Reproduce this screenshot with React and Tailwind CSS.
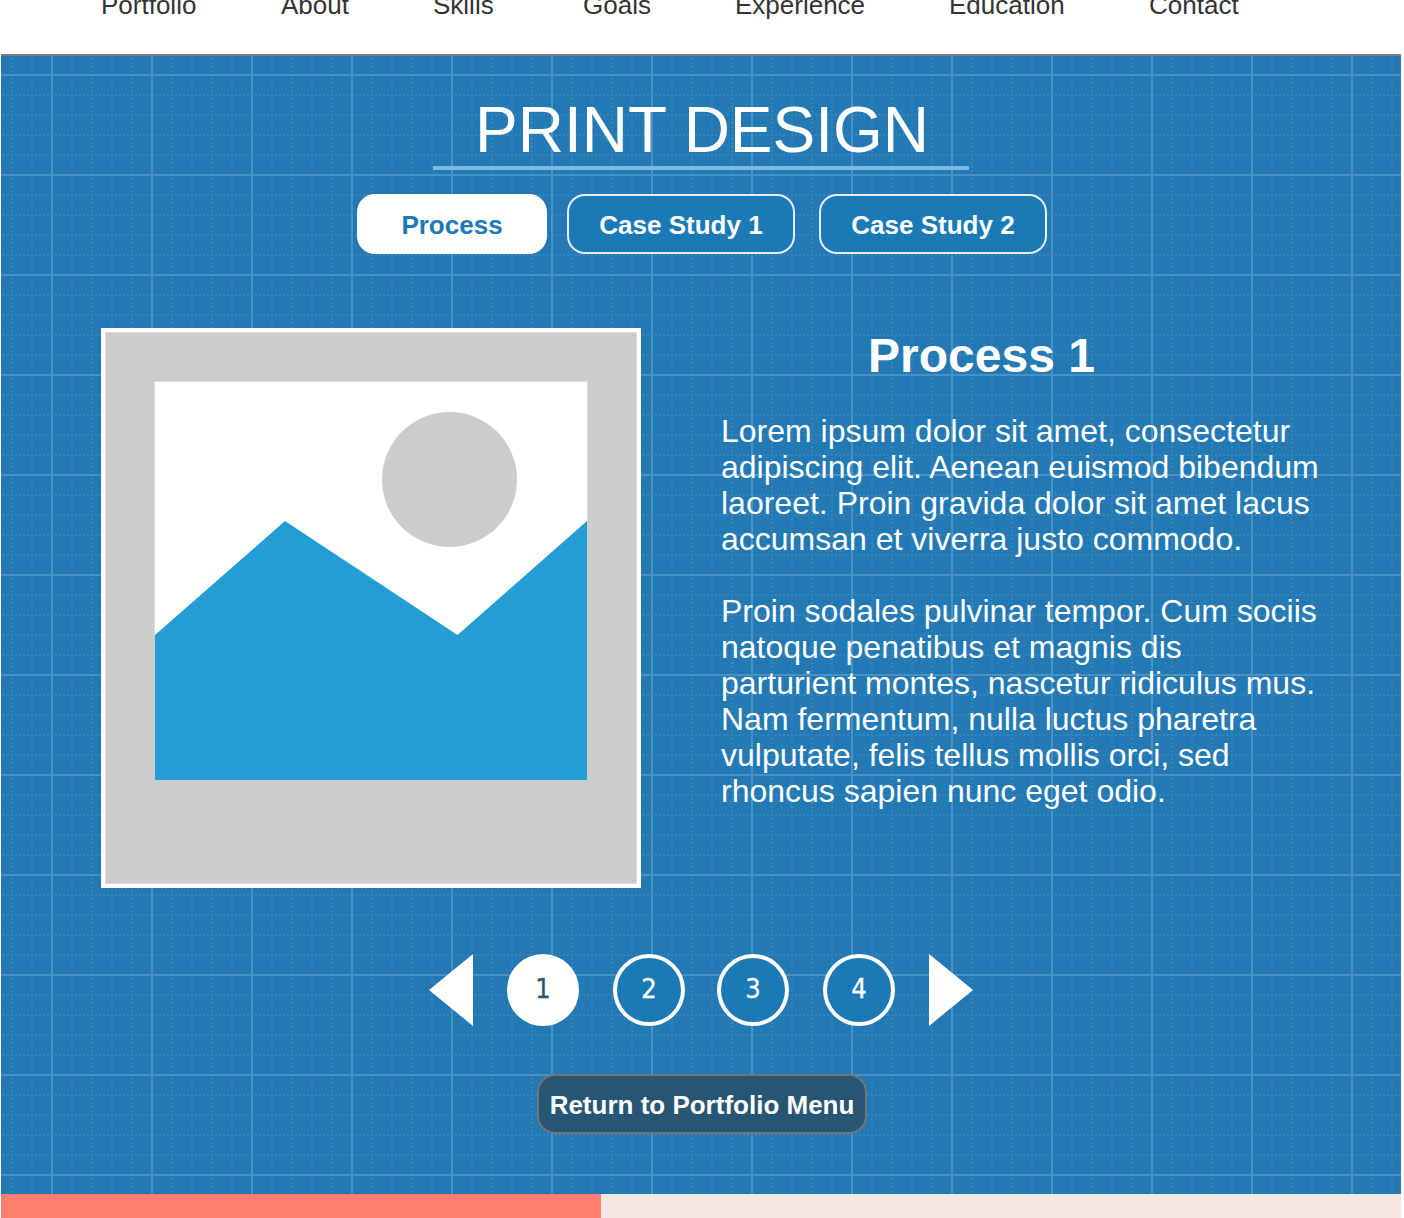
const navItems = [
  ['Portfolio', 'w-[180px]'],
  ['About', 'w-[152px]'],
  ['Skills', 'w-[150px]'],
  ['Goals', 'w-[152px]'],
  ['Experience', 'w-[214px]'],
  ['Education', 'w-[200px]'],
  ['Contact', 'w-[100px]'],
];

const steps = [20, 40, 60, 80];
const dots = Array.from({ length: 24 }, (_, i) => 4 + i * 4);

function Blueprint() {
  return (
    <svg className="absolute inset-0 h-full w-full" aria-hidden="true">
      <defs>
        <pattern id="grid" x="50" y="18" width="100" height="100" patternUnits="userSpaceOnUse">
          <rect width="100" height="100" fill="#2279b3" />
          {steps.map((s) =>
            dots.map((d) => (
              <g key={`${s}-${d}`} fill="#3584bb">
                <rect x={d} y={s} width="2" height="2" />
                <rect x={s} y={d} width="2" height="2" />
              </g>
            ))
          )}
          <rect width="100" height="2" fill="#4993c4" />
          <rect width="2" height="100" fill="#4993c4" />
        </pattern>
      </defs>
      <rect width="100%" height="100%" fill="url(#grid)" />
    </svg>
  );
}

function Placeholder() {
  return (
    <div className="h-[560px] w-[540px] border-4 border-white bg-[#cccccc]">
      <svg width="532" height="552" viewBox="0 0 532 552" className="block">
        <rect x="0.500" y="0.500" width="531" height="551" fill="none" stroke="#dedede" />
        <path d="M49.500 303V49.500H482.500V189" fill="none" stroke="#dedede" />
        <rect x="50" y="50" width="432" height="398" fill="#fff" />
        <circle cx="344.500" cy="147.500" r="67.500" fill="#cccccc" />
        <path d="M50 303L180 189L352.500 303L482 189V448H50Z" fill="#239dd3" />
      </svg>
    </div>
  );
}

function PageDot({ n, active, className = '' }) {
  return (
    <button
      className={`flex h-[72px] w-[72px] items-center justify-center rounded-full border-4 border-white pb-1 font-['DejaVu_Sans_Condensed','DejaVu_Sans',sans-serif] text-[27px] leading-none [-webkit-text-stroke:0.3px_currentColor] ${
        active ? 'bg-white text-[#265673]' : 'bg-[#1b79b5] text-white'
      } ${className}`}
    >
      {n}
    </button>
  );
}

export default function App() {
  return (
    <div className="h-[1218px] w-[1404px] overflow-hidden bg-white pr-[3px] pl-px font-['Liberation_Sans',Arial,sans-serif]">
      <nav className="flow-root h-14 border-b-2 border-[#7a7a7a] pl-[100px]">
        <div className="-mt-2.5 flex text-[26px] leading-[30px] text-[#333333]">
          {navItems.map(([label, width]) => (
            <a key={label} className={width}>
              {label}
            </a>
          ))}
        </div>
      </nav>

      <section className="relative h-[1138px]">
        <Blueprint />
        <div className="relative flex flex-col items-center">
          <h1 className="mt-9 h-[78px] w-[536px] border-b-4 border-[#7cb8df] pl-0.5 text-center text-[64px] leading-[76px] text-white">
            PRINT DESIGN
          </h1>

          <div className="mt-6 ml-0.5 flex text-[26px] font-bold">
            <button className="h-[60px] w-[190px] rounded-[18px] border-2 border-white bg-white leading-[58px] text-[#1b79b5]">
              Process
            </button>
            <button className="ml-5 h-[60px] w-[228px] rounded-[18px] border-2 border-[#e2eff7] bg-[#1b79b5] leading-[58px] text-white">
              Case Study 1
            </button>
            <button className="ml-6 h-[60px] w-[228px] rounded-[18px] border-2 border-[#e2eff7] bg-[#1b79b5] leading-[58px] text-white">
              Case Study 2
            </button>
          </div>

          <div className="mt-[74px] flex w-[1400px] gap-20 pl-[100px]">
            <Placeholder />
            <div className="w-[640px] text-[32px] leading-9 text-white">
              <h2 className="w-[521px] text-center text-5xl font-bold leading-14">Process 1</h2>
              <p className="mt-[29px]">
                Lorem ipsum dolor sit amet, consectetur
                <br />
                adipiscing elit. Aenean euismod bibendum
                <br />
                laoreet. Proin gravida dolor sit amet lacus
                <br />
                accumsan et viverra justo commodo.
              </p>
              <p className="mt-9">
                Proin sodales pulvinar tempor. Cum sociis
                <br />
                natoque penatibus et magnis dis
                <br />
                parturient montes, nascetur ridiculus mus.
                <br />
                Nam fermentum, nulla luctus pharetra
                <br />
                vulputate, felis tellus mollis orci, sed
                <br />
                rhoncus sapien nunc eget odio.
              </p>
            </div>
          </div>

          <div className="mt-[66px] flex">
            <svg width="44" height="72" viewBox="0 0 44 72" fill="#fff">
              <path d="M44 0V72L0 36Z" />
            </svg>
            <PageDot n="1" active className="ml-[34px]" />
            <PageDot n="2" className="ml-[34px]" />
            <PageDot n="3" className="ml-8" />
            <PageDot n="4" className="ml-[34px]" />
            <svg width="44" height="72" viewBox="0 0 44 72" fill="#fff" className="ml-[34px]">
              <path d="M0 0V72L44 36Z" />
            </svg>
          </div>

          <button className="mt-12 ml-0.5 h-[60px] w-[330px] rounded-[18px] border-2 border-[#6f757a] bg-[#265673] text-[26px] font-bold leading-[58px] whitespace-nowrap text-white">
            Return to Portfolio Menu
          </button>
        </div>
      </section>

      <div className="flex h-6 bg-[#f4e6e2]">
        <div className="w-[600px] bg-[#ff8070]" />
      </div>
    </div>
  );
}
